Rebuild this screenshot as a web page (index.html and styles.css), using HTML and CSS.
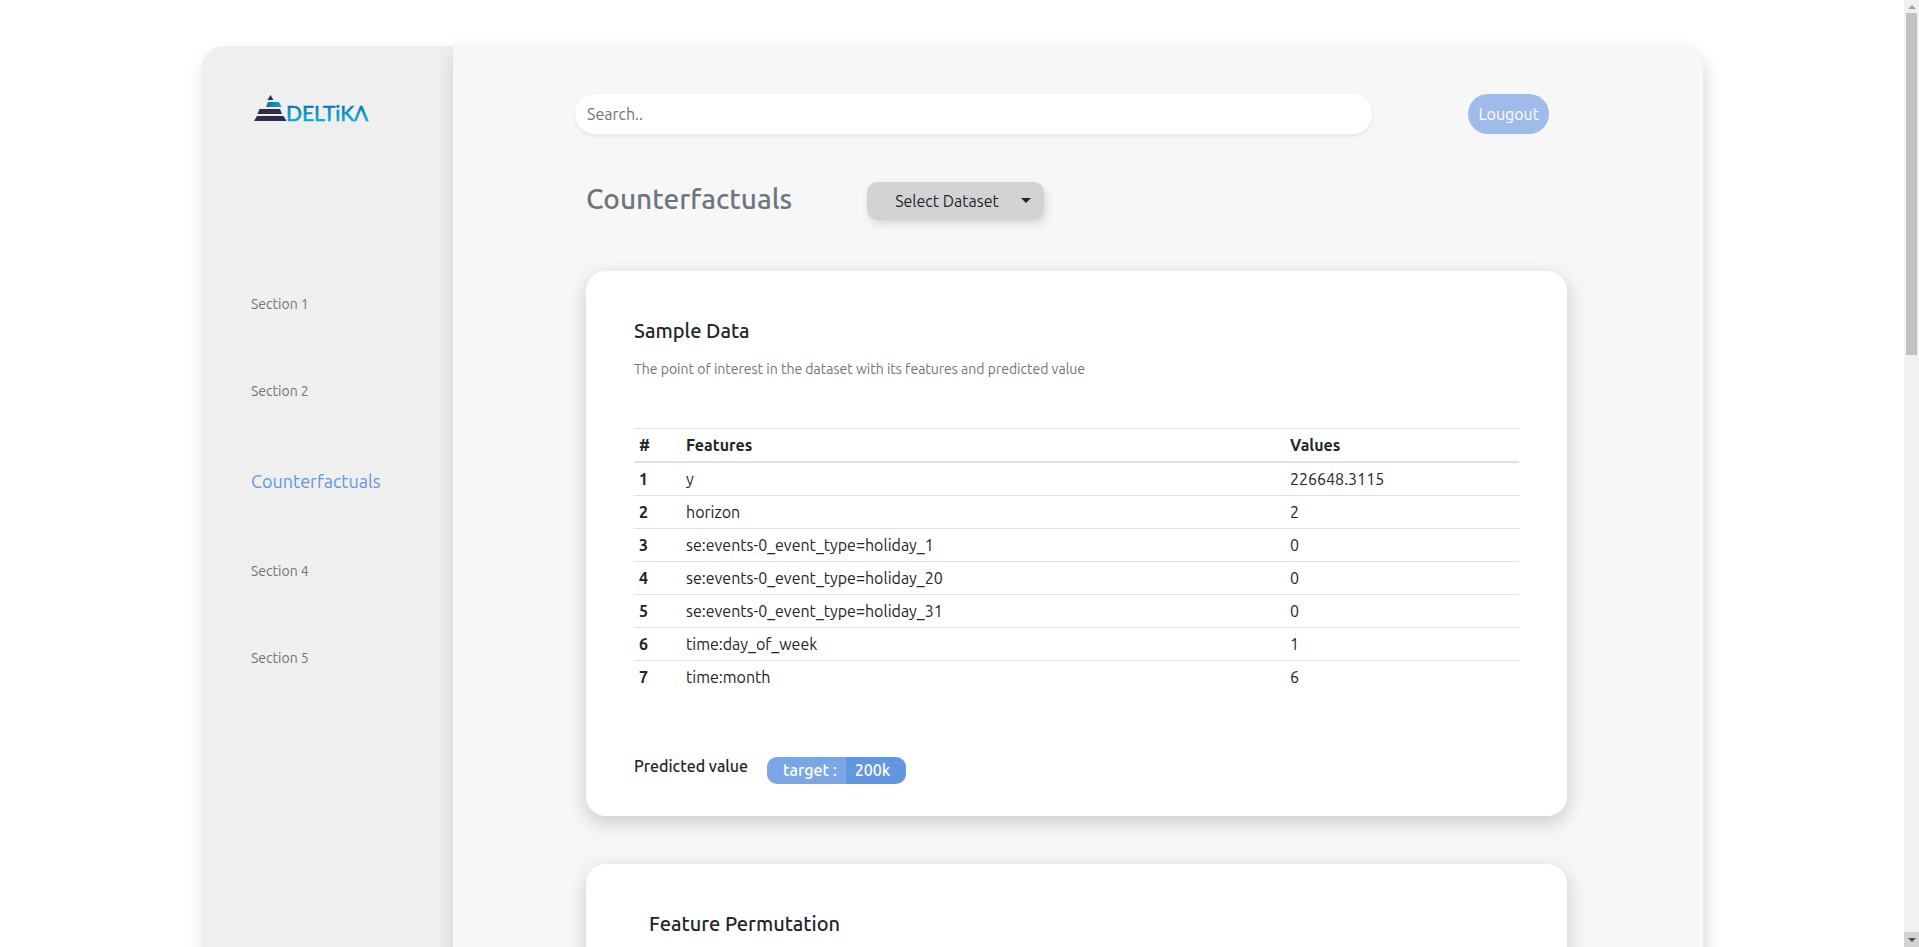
FILE: index.html
```html
<!DOCTYPE html>
<html lang="en">
<head>
<meta charset="utf-8">
<title>Counterfactuals</title>
<link rel="stylesheet" href="styles.css">
</head>
<body>
<div class="viewport">
  <div class="panel">
    <aside class="sidebar">
      <a class="logo" href="#" aria-label="Deltika">
        <svg width="120" height="32" viewBox="0 0 120 32">
          <defs>
            <linearGradient id="brand" x1="0" y1="0" x2="0" y2="1">
              <stop offset="0.2" stop-color="#0874a8"/>
              <stop offset="0.85" stop-color="#06addf"/>
            </linearGradient>
            <linearGradient id="tier" x1="0" y1="0" x2="1" y2="0">
              <stop offset="0" stop-color="#0b70a2"/>
              <stop offset="1" stop-color="#06a9dc"/>
            </linearGradient>
          </defs>
          <g fill="#2e2d4a">
            <path d="M16.500 1L19.500 6H13.500Z"/>
            <path d="M5.500 15H26L28 20H3.500Z"/>
            <path d="M3 22H29.500L32.500 27H0Z"/>
          </g>
          <path d="M14 8H25L27.500 13H12Z" fill="url(#tier)"/>
          <text class="logo-text" x="32" y="27" fill="url(#brand)" stroke="url(#brand)">DELTiKΛ</text>
        </svg>
      </a>
      <nav class="nav">
        <a class="nav-link" href="#">Section 1</a>
        <a class="nav-link" href="#">Section 2</a>
        <a class="nav-link active" href="#" aria-current="page">Counterfactuals</a>
        <a class="nav-link" href="#">Section 4</a>
        <a class="nav-link" href="#">Section 5</a>
      </nav>
    </aside>
    <main class="main">
      <div class="topbar">
        <input class="search" type="text" placeholder="Search.." aria-label="Search">
        <button class="logout" type="button">Lougout</button>
      </div>
      <div class="content">
        <div class="heading">
          <h1 class="title">Counterfactuals</h1>
          <div class="dataset">
            <select class="dataset-select" aria-label="Select Dataset"><option>Select Dataset</option></select>
          </div>
        </div>
        <section class="card">
          <h2 class="card-title">Sample Data</h2>
          <p class="card-note">The point of interest in the dataset with its features and predicted value</p>
          <table class="table">
            <thead>
              <tr><th class="col-index" scope="col">#</th><th scope="col">Features</th><th class="col-value" scope="col">Values</th></tr>
            </thead>
            <tbody>
              <tr><th scope="row">1</th><td>y</td><td>226648.3115</td></tr>
              <tr><th scope="row">2</th><td>horizon</td><td>2</td></tr>
              <tr><th scope="row">3</th><td>se:events-0_event_type=holiday_1</td><td>0</td></tr>
              <tr><th scope="row">4</th><td>se:events-0_event_type=holiday_20</td><td>0</td></tr>
              <tr><th scope="row">5</th><td>se:events-0_event_type=holiday_31</td><td>0</td></tr>
              <tr><th scope="row">6</th><td>time:day_of_week</td><td>1</td></tr>
              <tr><th scope="row">7</th><td>time:month</td><td>6</td></tr>
            </tbody>
          </table>
          <div class="prediction">
            <span class="prediction-label">Predicted value</span>
            <span class="badge"><span class="badge-key">target :</span><span class="badge-value">200k</span></span>
          </div>
        </section>
        <section class="card card-indented">
          <h2 class="card-title">Feature Permutation</h2>
        </section>
      </div>
    </main>
  </div>
</div>
<div class="scrollbar" aria-hidden="true">
  <span class="step"><span class="arrow arrow-up"></span></span>
  <span class="thumb"></span>
  <span class="step step-down"><span class="arrow arrow-down"></span></span>
</div>
</body>
</html>
```
FILE: styles.css
```css
* { box-sizing: border-box; }

body {
  margin: 0;
  height: 100vh;
  display: flex;
  overflow: hidden;
  background: #fff;
  color: #212529;
  font-family: Ubuntu, "Noto Sans", sans-serif;
  font-size: 16px;
  line-height: 24px;
}

input, select, button { font: inherit; }

.viewport {
  flex: 1;
  min-width: 0;
  overflow: auto;
  scrollbar-width: none;
  padding: 46px 24px 0;
}

.panel {
  display: flex;
  max-width: 1502px;
  min-height: 100%;
  margin: 0 auto;
  border-radius: 24px;
  background: #efefef;
  box-shadow: 0 8px 20px rgba(0, 0, 0, 0.08);
}

.sidebar {
  flex: 0 0 252px;
  padding: 48px 48px 0 50px;
}

.logo { display: block; margin-left: 3px; }
.logo svg { display: block; }

.logo-text {
  font-family: Lato, sans-serif;
  font-size: 21px;
  stroke-width: 0.5px;
}

.nav {
  display: flex;
  flex-direction: column;
  gap: 66px;
  margin-top: 168px;
}

.nav-link {
  color: #6c757d;
  font-size: 14px;
  line-height: 21px;
  text-decoration: none;
}

.nav-link.active { color: #6296e2; font-size: 18px; line-height: 27px; }

.main {
  flex: 1;
  min-width: 0;
  padding: 48px 124px 48px 122px;
  border-radius: 0 24px 0 0;
  background: #f7f7f7;
  box-shadow: 0 8px 20px rgba(0, 0, 0, 0.13);
}

.topbar {
  display: flex;
  justify-content: space-between;
  padding-right: 30px;
}

.search {
  flex: 0 1 797px;
  min-width: 0;
  height: 40px;
  padding: 0 12px;
  border: 0;
  border-radius: 20px;
  background: #fff;
  box-shadow: 0 2px 4px rgba(0, 0, 0, 0.08);
}

.search::placeholder { color: #6c757d; opacity: 1; }

.logout {
  height: 40px;
  padding: 0 10px;
  border: 0;
  border-radius: 20px;
  background: #9ebbea;
  color: #fff;
}

.content { padding: 48px 12px 0 11px; }

.heading { display: flex; gap: 75px; margin-bottom: 51px; }

.title {
  margin: 0;
  color: #6c757d;
  font-size: 28px;
  font-weight: 500;
  line-height: 34px;
}

.dataset { position: relative; }

.dataset::after {
  content: "";
  position: absolute;
  top: 16px;
  right: 13px;
  border: 5px solid transparent;
  border-top-color: #212529;
  border-bottom: 0;
  pointer-events: none;
}

.dataset-select {
  appearance: none;
  width: 177px;
  height: 38px;
  padding: 0 28px;
  border: 0;
  border-radius: 10px;
  background: #d3d3d3;
  color: #212529;
  box-shadow: 2px 4px 8px rgba(0, 0, 0, 0.12);
}

.card {
  margin-bottom: 48px;
  padding: 48px 48px 32px;
  border-radius: 20px;
  background: #fff;
  box-shadow: 0 6px 20px rgba(0, 0, 0, 0.19);
}

.card-indented { padding-left: 63px; }

.card-title {
  margin: 0;
  font-size: 20px;
  font-weight: 500;
  line-height: 24px;
}

.card-note {
  margin: 16px 0 48px;
  color: #6c757d;
  font-size: 14px;
  line-height: 21px;
}

.table {
  width: 100%;
  table-layout: fixed;
  border-spacing: 0;
}

.table th, .table td {
  padding: 4px 5px;
  border-bottom: 1px solid #dee2e6;
  text-align: left;
}

.table thead th { border-top: 1px solid #dee2e6; border-bottom-width: 2px; }
.table tbody tr:last-child > * { border-bottom: 0; }
.table .col-index { width: 47px; }
.table .col-value { width: 234px; }

.prediction {
  display: flex;
  align-items: flex-start;
  gap: 19px;
  margin-top: 61px;
  font-weight: 500;
}

.badge {
  display: flex;
  margin-top: 3px;
  border-radius: 10px;
  overflow: hidden;
  color: #fff;
  line-height: 27px;
}

.badge-key { padding: 0 9px 0 16px; background: #7aa6e6; }
.badge-value { padding: 0 16px 0 9px; background: #6296e2; }

.scrollbar {
  flex: 0 0 15px;
  display: flex;
  flex-direction: column;
  align-items: center;
  background: #f1f1f1;
}

.thumb { width: 11px; height: 342px; background: #c1c1c1; }

.step {
  display: flex;
  align-items: center;
  justify-content: center;
  width: 100%;
  height: 13px;
}

.step-down { height: 15px; margin-top: auto; background: #d2d2d2; }

.arrow { border: 4px solid transparent; }
.arrow-up { border-top: 0; border-bottom-color: #a3a3a3; }
.arrow-down { border-bottom: 0; border-top-color: #505050; }
```
